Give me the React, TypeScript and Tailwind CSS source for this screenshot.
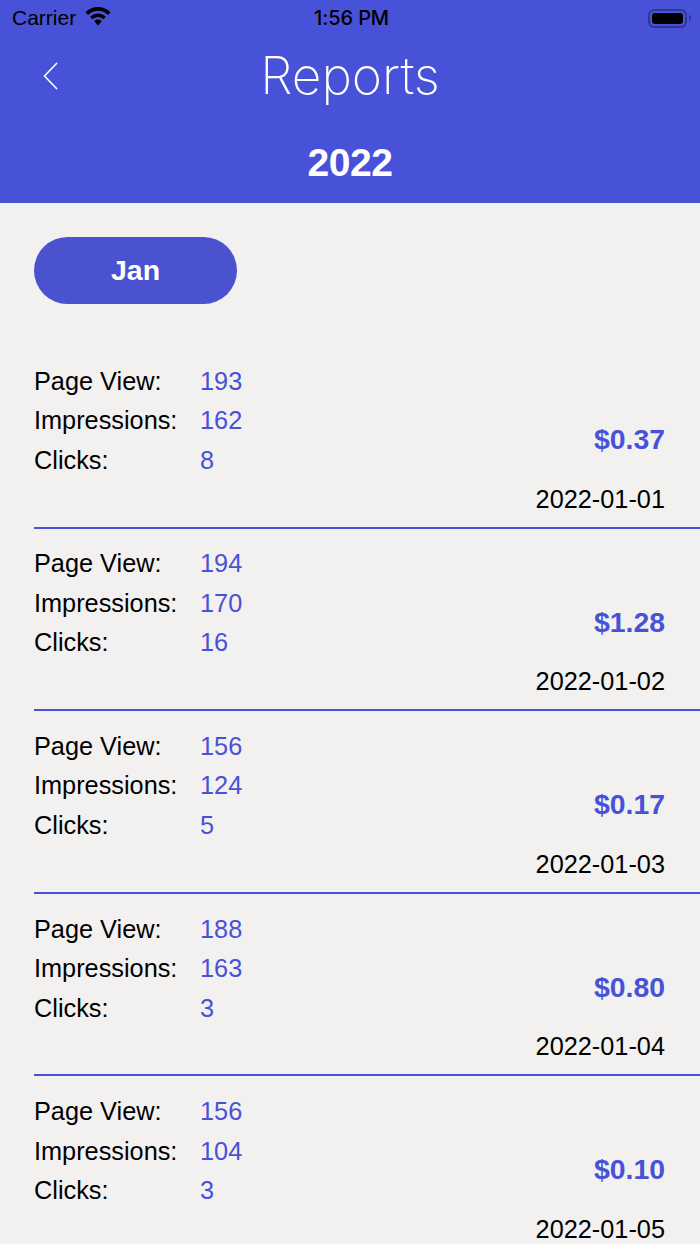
import React from 'react';

const reports = [
  { views: 193, impressions: 162, clicks: 8, amount: '$0.37', date: '2022-01-01' },
  { views: 194, impressions: 170, clicks: 16, amount: '$1.28', date: '2022-01-02' },
  { views: 156, impressions: 124, clicks: 5, amount: '$0.17', date: '2022-01-03' },
  { views: 188, impressions: 163, clicks: 3, amount: '$0.80', date: '2022-01-04' },
  { views: 156, impressions: 104, clicks: 3, amount: '$0.10', date: '2022-01-05' },
];

const StatusBar = () => (
  <div className="h-9 flex items-center justify-between pl-3 pr-[9px] text-black font-['Liberation_Sans',sans-serif] text-[21px]">
    <div className="flex items-center gap-[9px] w-[200px]">
      <span>Carrier</span>
      <svg width="26" height="19" viewBox="0 0 26 19" fill="black" className="-mt-[3px]">
        <path d="M13 0C8 0 3.6 2 .5 5.2l2.6 2.7C5.7 5.3 9.2 3.7 13 3.7s7.3 1.6 9.9 4.2l2.6-2.7C22.4 2 18 0 13 0z" />
        <path d="M13 6.4c-3.1 0-5.9 1.3-7.9 3.3l2.6 2.7c1.4-1.4 3.3-2.3 5.3-2.3s3.9.9 5.3 2.3l2.6-2.7c-2-2-4.8-3.3-7.9-3.3z" />
        <path d="M13 12.6c-1.5 0-2.8.6-3.8 1.6l3.8 4.2 3.8-4.2c-1-1-2.3-1.6-3.8-1.6z" />
      </svg>
    </div>
    <span className="font-medium font-['Inter',sans-serif] text-[20px] tracking-[-0.1px]">1:56 PM</span>
    <div className="flex items-center justify-end gap-[2px] w-[200px]">
      <div className="w-[39px] h-[19px] rounded-[6px] border-2 border-[#2f3896] p-[2px]">
        <div className="w-full h-full rounded-[3px] bg-black" />
      </div>
      <div className="w-[2px] h-[6px] rounded-r-full bg-[#2f3896]" />
    </div>
  </div>
);

const ReportRow = ({ report }: { report: (typeof reports)[number] }) => (
  <div className="h-[182.6px] ml-[34px] pt-4 border-b-2 border-[#4752d8] flex justify-between pr-[35px] text-[25.3px] font-['Liberation_Sans',sans-serif]">
    <div className="grid grid-cols-[166px_auto] auto-rows-[39.5px] items-center content-start text-black">
      <span>Page View:</span>
      <span className="text-[#4752d8]">{report.views}</span>
      <span>Impressions:</span>
      <span className="text-[#4752d8]">{report.impressions}</span>
      <span>Clicks:</span>
      <span className="text-[#4752d8]">{report.clicks}</span>
    </div>
    <div className="flex flex-col items-end">
      <span className="mt-[57px] h-10 leading-10 text-[28.4px] font-bold text-[#4752d8]">{report.amount}</span>
      <span className="mt-[19.5px] h-10 leading-10 text-black">{report.date}</span>
    </div>
  </div>
);

export default function App() {
  return (
    <div className="w-[700px] h-[1244px] overflow-hidden bg-[#f2f1f0]">
      {/* Header */}
      <div className="h-[203px] bg-[#4752d8] text-white">
        <StatusBar />
        <div className="h-20 px-[43px] grid grid-cols-[1fr_auto_1fr] items-center">
          <svg width="15" height="28" viewBox="0 0 15 28" fill="none" stroke="white" strokeWidth="1.6" className="-mt-[1px]">
            <path d="M14 1 1.5 14 14 27" />
          </svg>
          <h1 className="text-[51.5px] font-extralight font-['Inter',sans-serif]">Reports</h1>
        </div>
        <div className="mt-[25px] text-center text-[39px] leading-[44px] font-bold tracking-[-0.5px] font-['Liberation_Sans',sans-serif]">2022</div>
      </div>

      {/* Month */}
      <div className="pt-[34px] pl-[34px]">
        <button className="w-[203px] h-[67px] rounded-full bg-[#4a52cf] text-white text-[28.5px] font-bold font-['Liberation_Sans',sans-serif]">
          Jan
        </button>
      </div>

      {/* Rows */}
      <div className="mt-[42px]">
        {reports.map((report) => (
          <ReportRow key={report.date} report={report} />
        ))}
      </div>
    </div>
  );
}
